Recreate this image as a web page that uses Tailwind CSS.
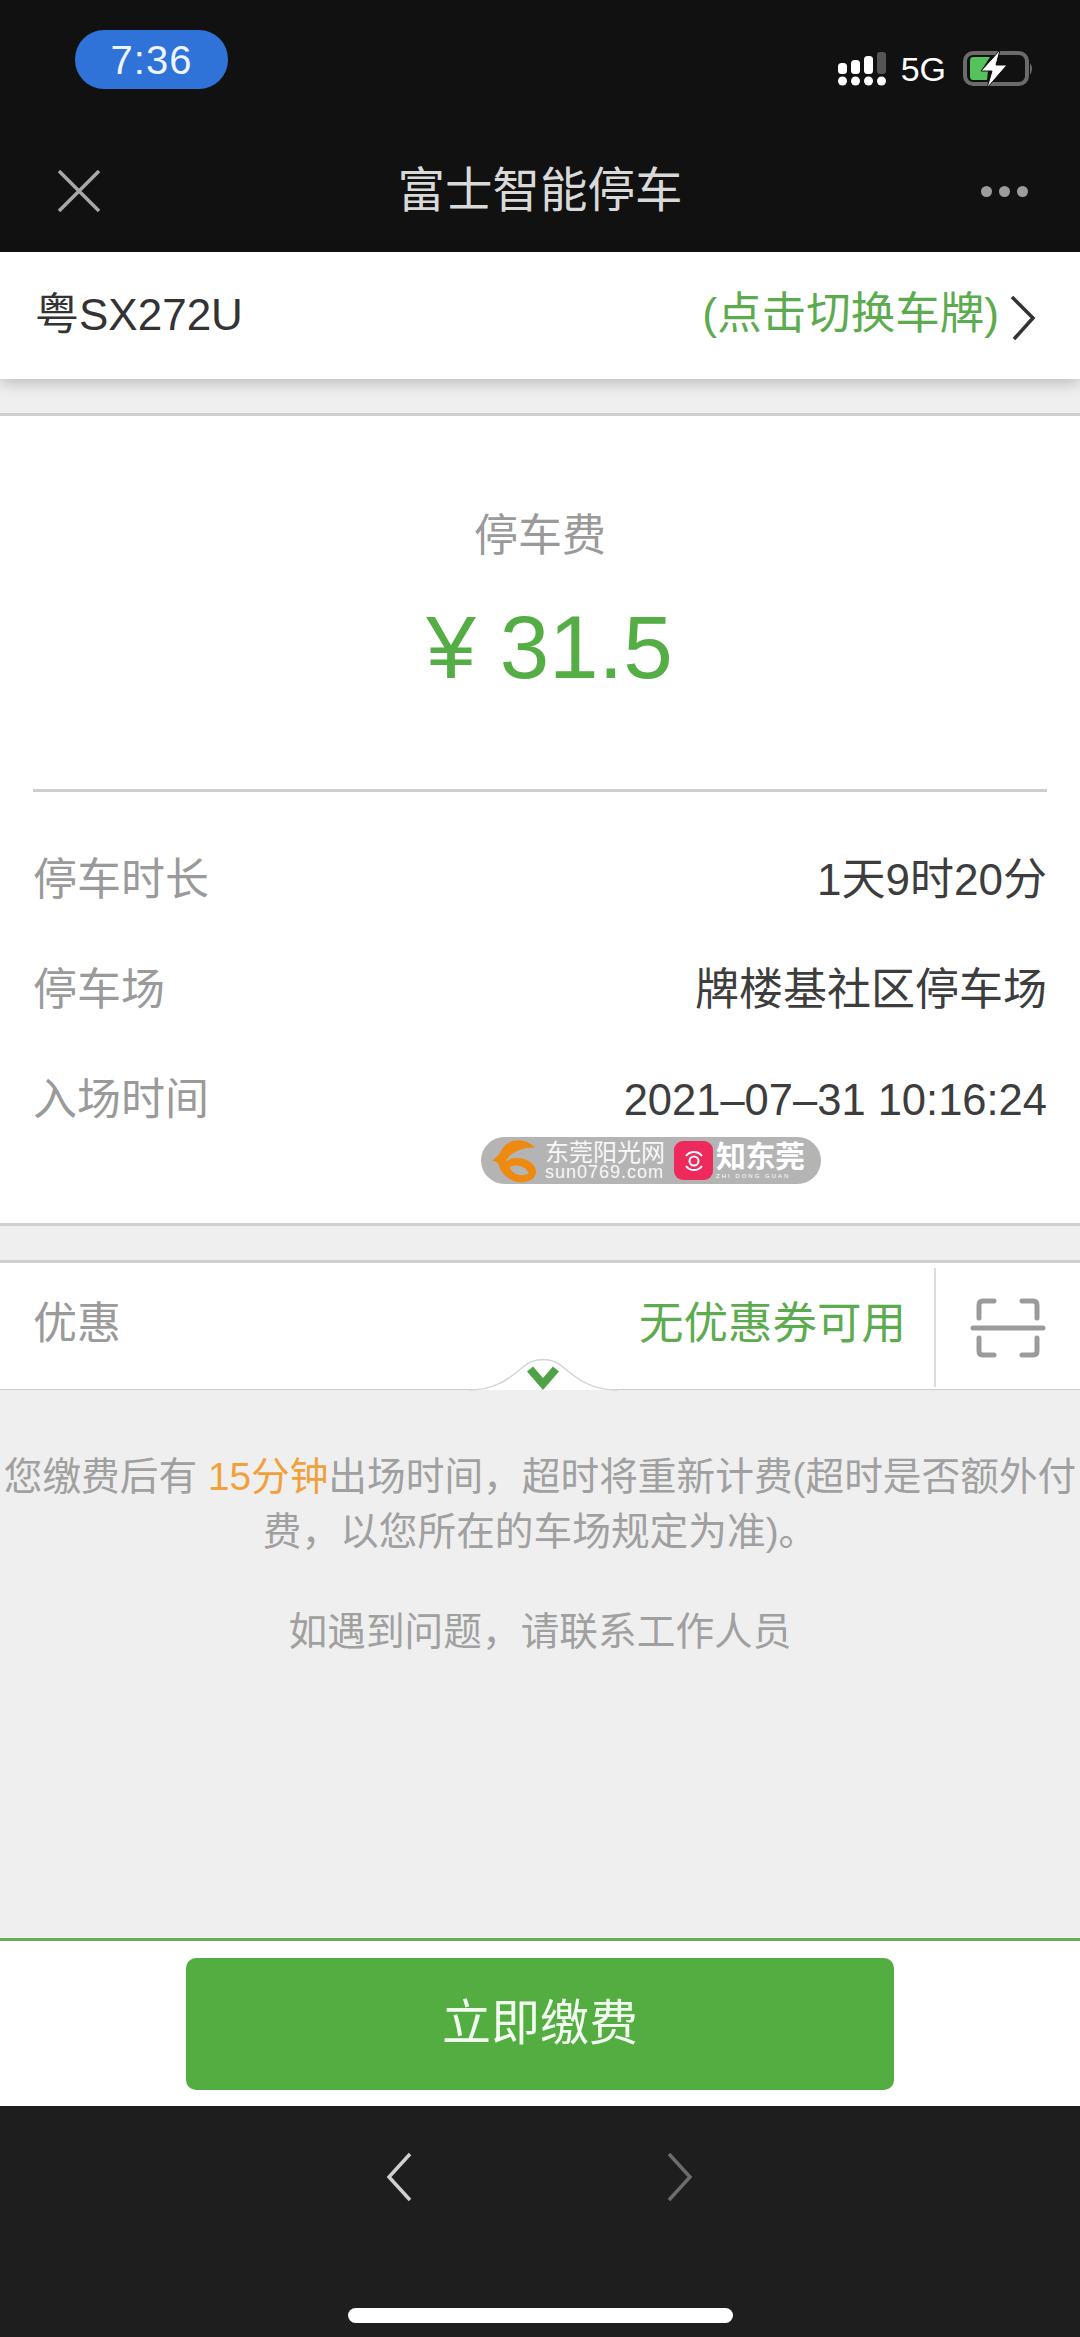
<!DOCTYPE html>
<html lang="zh-CN">
<head>
  <meta charset="UTF-8" />
  <meta name="viewport" content="width=device-width, initial-scale=1.0" />
  <title>富士智能停车</title>
  <script src="https://cdn.jsdelivr.net/npm/@tailwindcss/browser@4"></script>
</head>
<body class="bg-[#efefef] font-['Liberation_Sans','Noto_Sans_CJK_SC',sans-serif]">
  <div class="w-[1080px] h-[2337px] flex flex-col overflow-hidden relative">

    <!-- Status bar + title -->
    <header class="h-[252px] shrink-0 bg-[#111111] relative">
      <div class="h-[135px] flex justify-between">
        <div class="ml-[75px] mt-[30px] w-[153px] h-[59px] rounded-[29px] bg-[#2f72d8] flex items-center justify-center text-[#eef4ff] text-[40px] tracking-[1px]">7:36</div>
        <div class="mr-[45px] mt-[43px] h-[52px] flex items-center">
          <svg width="48" height="34" viewBox="0 0 48 34" class="mr-[15px]">
            <rect x="0" y="11" width="9" height="11" rx="3.5" fill="#fff"/><rect x="13" y="8" width="9" height="14" rx="3.5" fill="#fff"/><rect x="26" y="4" width="9" height="18" rx="3.5" fill="#fff"/><rect x="39" y="0" width="9" height="22" rx="3" fill="#555"/>
            <circle cx="4.5" cy="29" r="4.5" fill="#fff"/><circle cx="17.5" cy="29" r="4.5" fill="#fff"/><circle cx="30.5" cy="29" r="4.5" fill="#fff"/><circle cx="43.5" cy="29" r="4.5" fill="#fff"/>
          </svg>
          <span class="text-[34px] text-white mr-[17px]">5G</span>
          <svg width="72" height="42" viewBox="0 0 72 42">
            <rect x="2" y="5" width="62" height="31" rx="8" fill="none" stroke="#6b6b6b" stroke-width="4"/>
            <path d="M10 9 H27 L18 23 H25 L24 32 H10 Q7 32 7 28 V13 Q7 9 10 9 Z" fill="#55c25c"/>
            <path d="M67 15 Q71 20 67 27 Z" fill="#6b6b6b"/>
            <path d="M37 2 L18 23 H29 L24 40 L44 17 H33 Z" fill="#fff" stroke="#111" stroke-width="1"/>
          </svg>
        </div>
      </div>
      <div class="absolute left-0 right-0 top-[170px] flex items-center justify-between pl-[58px] pr-[52px]">
        <svg width="42" height="42" viewBox="0 0 42 42"><path d="M1 1 L41 41 M41 1 L1 41" stroke="#a8a8a8" stroke-width="3.5" fill="none"/></svg>
        <h1 class="absolute left-0 right-0 text-center text-[47.5px] leading-[60px] text-[#d9d9d9]">富士智能停车</h1>
        <div class="flex gap-[7px]">
          <span class="w-[11px] h-[11px] rounded-full bg-[#9c9c9c]"></span><span class="w-[11px] h-[11px] rounded-full bg-[#9c9c9c]"></span><span class="w-[11px] h-[11px] rounded-full bg-[#9c9c9c]"></span>
        </div>
      </div>
    </header>

    <!-- Plate row -->
    <div class="h-[127px] shrink-0 bg-white flex items-center justify-between pl-[35px] pr-[44px] shadow-[0_4px_14px_rgba(0,0,0,0.22)] relative z-10">
      <span class="text-[44px] text-[#333333] -mt-[1px]">粤SX272U</span>
      <div class="flex items-center">
        <span class="text-[44.5px] text-[#5cab4e] -mt-[2px]">(点击切换车牌)</span>
        <svg width="26" height="46" viewBox="0 0 26 46" class="ml-[11px] mt-[4px]"><path d="M2 2 L23 23 L4 44" stroke="#333" stroke-width="3.5" fill="none"/></svg>
      </div>
    </div>

    <div class="h-[34px] shrink-0"></div>

    <!-- Fee card -->
    <section class="h-[813px] shrink-0 bg-white border-y-[3px] border-[#cfcfcf] relative">
      <div class="h-[376px] mx-[33px] border-b-[3px] border-[#cfcfcf] flex flex-col items-center">
        <p class="mt-[90px] text-[44px] leading-[60px] text-[#9a9a9a]">停车费</p>
        <p class="mt-[26px] ml-[19px] text-[89px] leading-[110px] text-[#55ad45]"><span class="mr-[24px]">¥</span>31.5</p>
      </div>
      <dl class="px-[33px] pt-[58px] flex flex-col gap-[50px] text-[44px] leading-[60px]">
        <div class="flex justify-between"><dt class="text-[#9a9a9a]">停车时长</dt><dd class="text-[#3d3d3d]">1天9时20分</dd></div>
        <div class="flex justify-between"><dt class="text-[#9a9a9a]">停车场</dt><dd class="text-[#3d3d3d]">牌楼基社区停车场</dd></div>
        <div class="flex justify-between"><dt class="text-[#9a9a9a]">入场时间</dt><dd class="text-[#3d3d3d] text-[43.5px]">2021–07–31 10:16:24</dd></div>
      </dl>
      <!-- Watermark -->
      <div class="absolute left-[481px] top-[721px] w-[340px] h-[47px] rounded-full bg-[#b4b4b4] flex items-center pl-[7px]">
        <svg width="52" height="44" viewBox="0 0 44 42" class="shrink-0">
          <path d="M42 8 C30 -3 14 0 9 13 C6 17 3 19 1 21 C5 21 8 23 8 27 C12 38 28 46 40 38 C44 34 44 28 40 24 C33 17 20 16 14 22 C18 12 30 8 42 8 Z" fill="#ee8a10"/>
          <path d="M18 27 C24 23 34 26 36 33 C28 37 20 33 18 27 Z" fill="#b4b4b4"/>
        </svg>
        <div class="ml-[5px] w-[120px] shrink-0 text-white/90 leading-none">
          <p class="text-[24px] leading-[24px] whitespace-nowrap">东莞阳光网</p>
          <p class="text-[18px] leading-[15px] tracking-[1px]">sun0769.com</p>
        </div>
        <div class="ml-[9px] w-[39px] h-[39px] shrink-0 rounded-[9px] bg-[#ee2a5c] flex items-center justify-center">
          <svg width="24" height="24" viewBox="0 0 24 24" fill="none" stroke="#fff" stroke-width="2"><path d="M4 7 A10 10 0 0 1 20 7 M4 17 A10 10 0 0 0 20 17"/><circle cx="12" cy="12" r="4.5"/></svg>
        </div>
        <div class="ml-[3px] text-white leading-none">
          <p class="text-[30px] leading-[32px] font-bold tracking-[-0.5px]">知东莞</p>
          <p class="text-[6px] leading-[7px] tracking-[2px] whitespace-nowrap">ZHI DONG GUAN</p>
        </div>
      </div>
    </section>

    <div class="h-[34px] shrink-0"></div>

    <!-- Coupon row -->
    <section class="h-[130px] shrink-0 bg-white border-t-[3px] border-b-[1px] border-t-[#cfcfcf] border-b-[#cccccc] flex relative">
      <span class="ml-[33px] mt-[31px] text-[44px] leading-[60px] text-[#9a9a9a]">优惠</span>
      <span class="ml-auto mt-[31px] text-[44.5px] leading-[60px] text-[#5cab4e]">无优惠券可用</span>
      <div class="ml-[28px] mt-[5px] mb-[2px] w-[146px] border-l-2 border-[#dcdcdc] flex items-center justify-center">
        <svg width="76" height="60" viewBox="0 0 76 60" fill="none" stroke="#9b9b9b" stroke-width="5" stroke-linecap="round">
          <path d="M3 30 H73"/><path d="M24 3 H13 Q9 3 9 7 V20"/><path d="M52 3 H63 Q67 3 67 7 V20"/><path d="M9 40 V53 Q9 57 13 57 H24"/><path d="M67 40 V53 Q67 57 63 57 H52"/>
        </svg>
      </div>
      <svg width="150" height="38" viewBox="0 0 150 38" class="absolute left-[468px] top-[91px]">
        <path d="M0 36 C26 36 40 26 55 13 C66 3 84 3 95 13 C110 26 124 36 150 36 Z" fill="#fff"/>
        <path d="M0 36 C26 36 40 26 55 13 C66 3 84 3 95 13 C110 26 124 36 150 36" fill="none" stroke="#d4d4d4" stroke-width="1.5"/>
        <path d="M62 15 L75 30 L88 15" fill="none" stroke="#4fa346" stroke-width="8"/>
      </svg>
    </section>

    <!-- Notice -->
    <div class="flex-1 text-center text-[38.7px] leading-[55px] text-[#a0a0a0] pt-[59px]">
      <p class="whitespace-nowrap">您缴费后有 <span class="text-[#f0a13c]">15分钟</span>出场时间，超时将重新计费(超时是否额外付</p>
      <p>费，以您所在的车场规定为准)。</p>
      <p class="mt-[45px]">如遇到问题，请联系工作人员</p>
    </div>

    <!-- Pay bar -->
    <div class="h-[168px] shrink-0 bg-white border-t-[3px] border-[#6aab58] flex justify-center pt-[17px]">
      <button class="w-[708px] h-[132px] rounded-[10px] bg-[#53ad40] text-[49px] text-[#f2fbef]">立即缴费</button>
    </div>

    <!-- Browser nav -->
    <footer class="h-[231px] shrink-0 bg-[#1e1e1e] flex flex-col items-center">
      <div class="mt-[46px] flex items-center gap-[255px] -ml-[2px]">
        <svg width="26" height="50" viewBox="0 0 26 50" fill="none" stroke-width="3.5"><path d="M24 2 L3 25 L24 48" stroke="#d0d0d0"/></svg>
        <svg width="26" height="50" viewBox="0 0 26 50" fill="none" stroke-width="3.5"><path d="M2 2 L23 25 L2 48" stroke="#6c6c6c"/></svg>
      </div>
      <div class="mt-[106px] w-[385px] h-[15px] rounded-full bg-white"></div>
    </footer>
  </div>
</body>
</html>
